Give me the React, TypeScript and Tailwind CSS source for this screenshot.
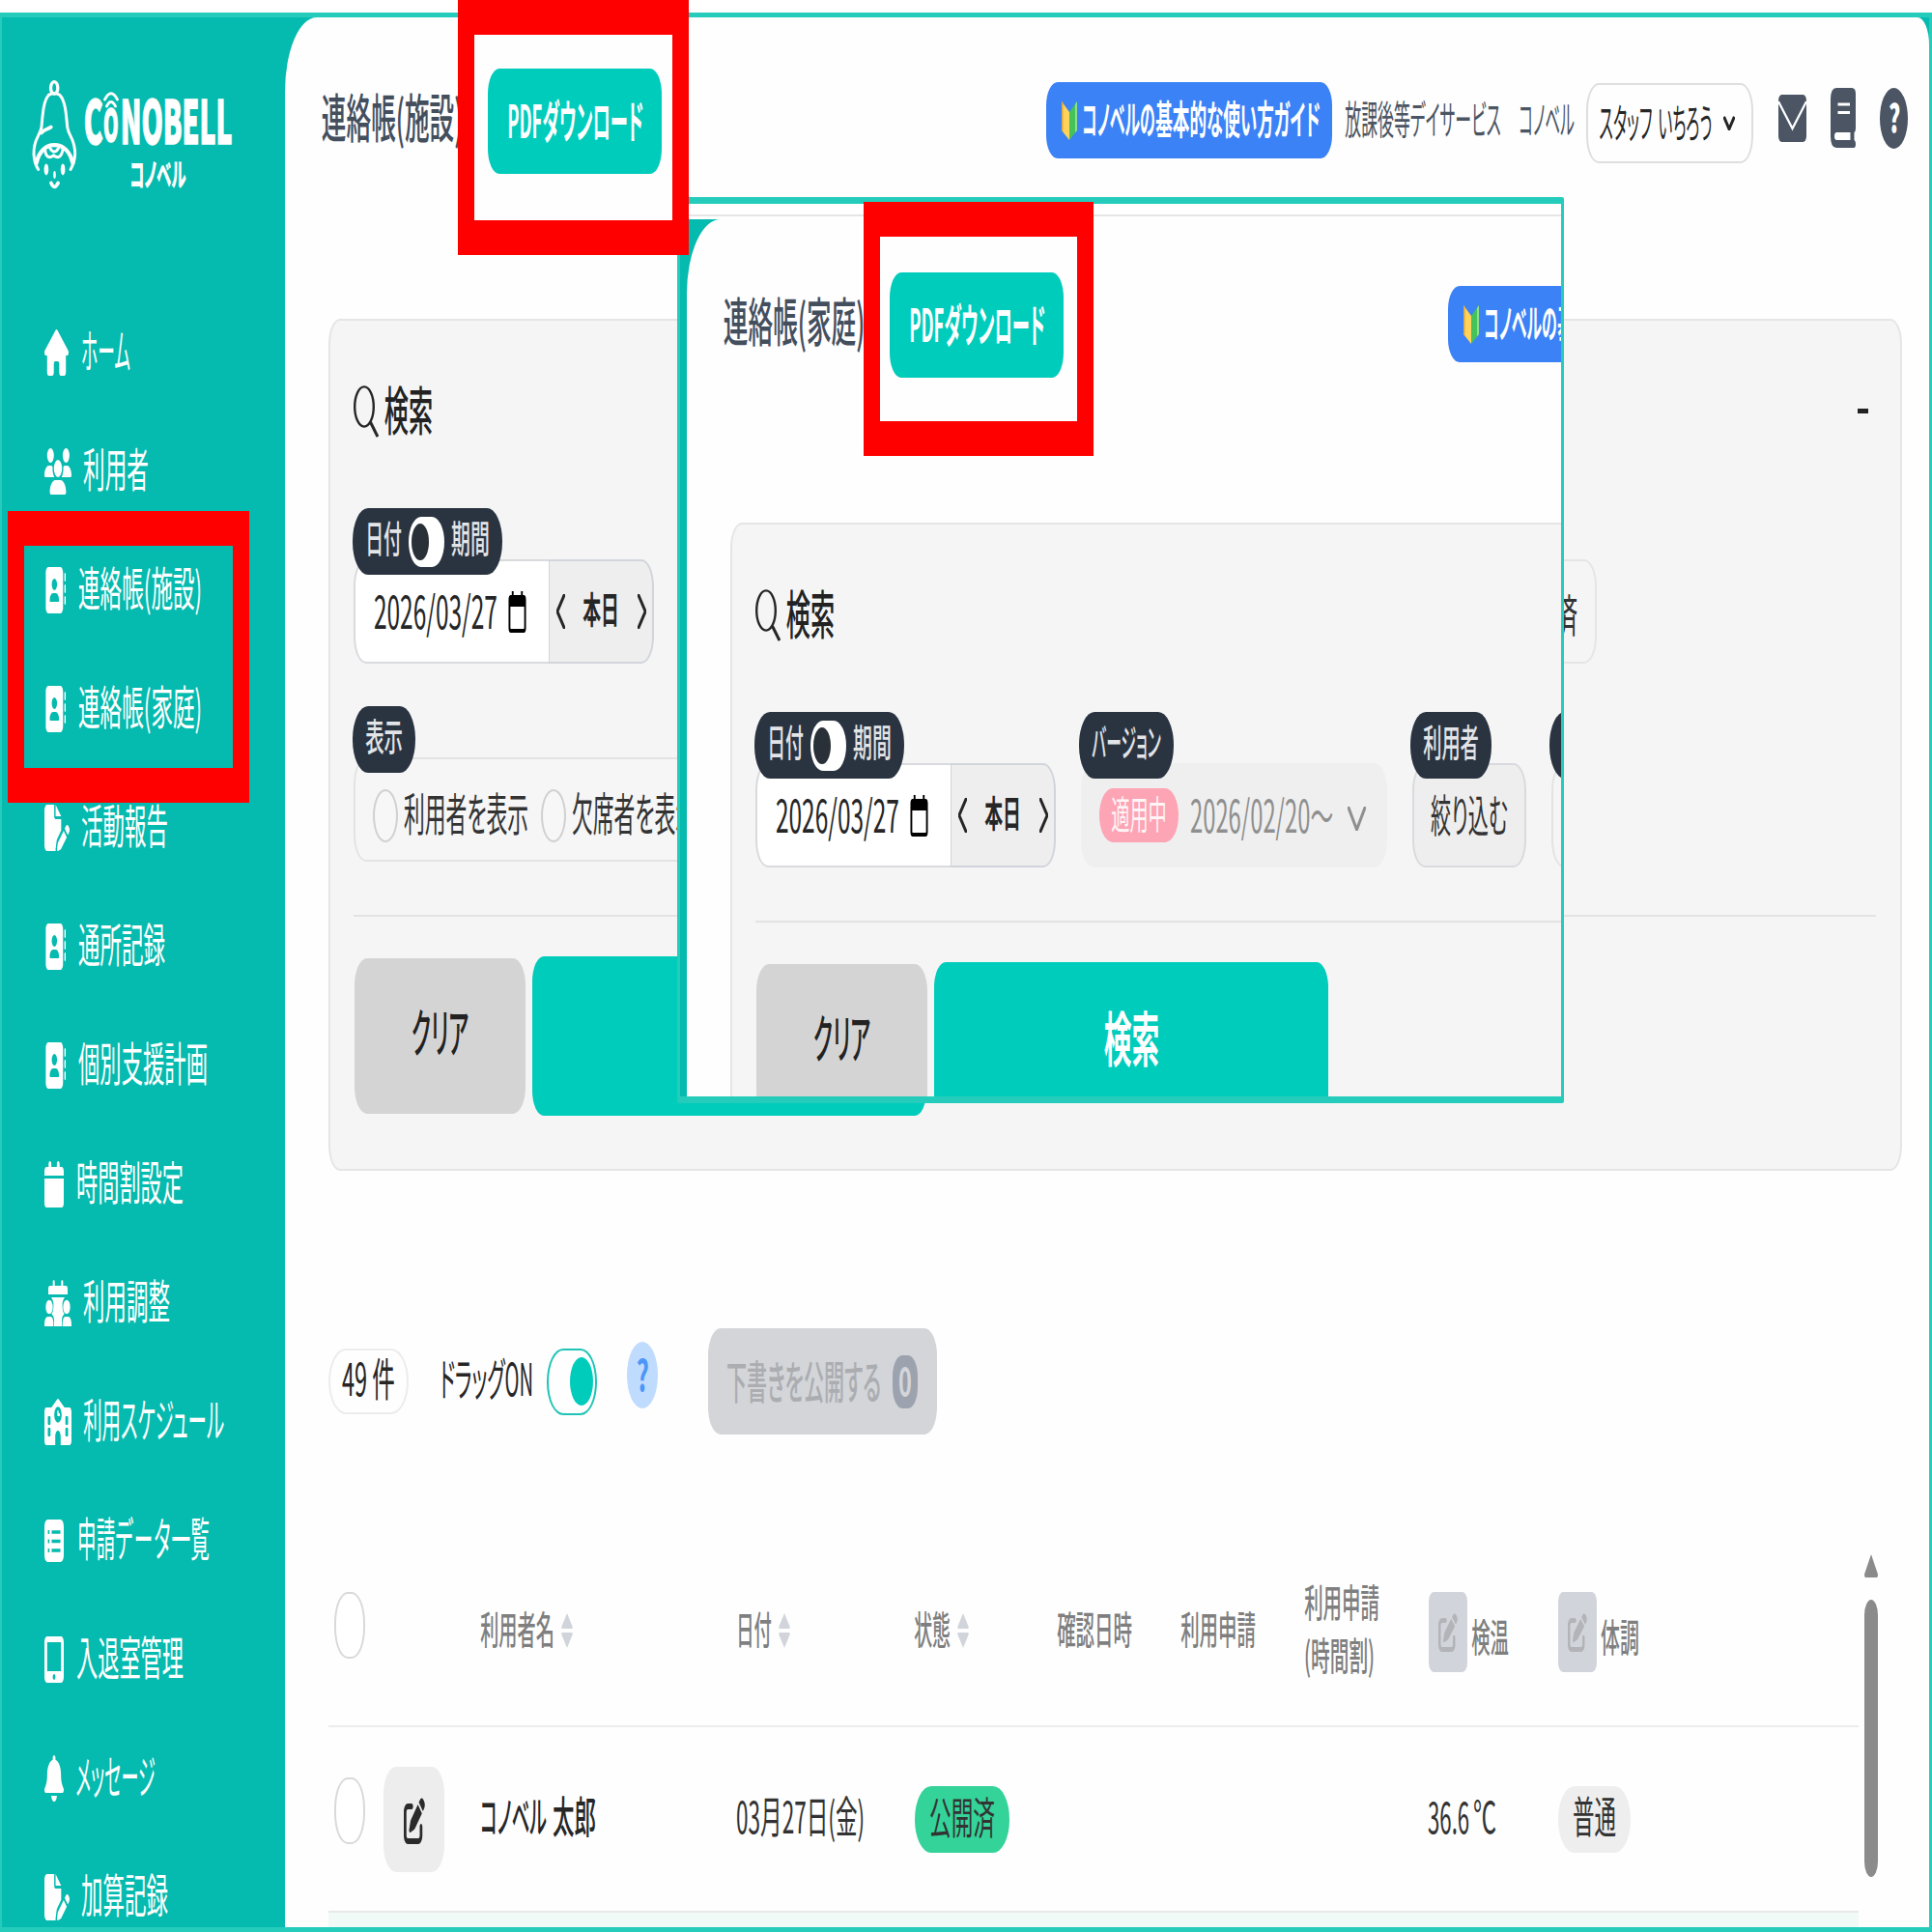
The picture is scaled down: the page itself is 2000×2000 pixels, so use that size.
import { useLayoutEffect, useRef } from "react";
import type { ReactNode } from "react";
import {
  FaHouse,
  FaUsers,
  FaAddressBook,
  FaFilePen,
  FaCalendar,
  FaSchool,
  FaTabletScreenButton,
  FaBell,
  FaPenToSquare,
} from "react-icons/fa6";

/* Condensed text: squeezes one line so that its glyphs span the box's width. */
function Fit({ children, className = "" }: { children: ReactNode; className?: string }) {
  const outer = useRef<HTMLSpanElement>(null);
  const inner = useRef<HTMLSpanElement>(null);
  useLayoutEffect(() => {
    const o = outer.current!;
    const i = inner.current!;
    const fs = parseFloat(getComputedStyle(o).fontSize);
    const bearing = 0.045 * fs;
    const k = o.clientWidth / (i.offsetWidth - bearing * 2);
    i.style.transform = `translate(${-bearing * k}px, ${-0.056 * fs}px) scaleX(${k})`;
  }, []);
  return (
    <span ref={outer} className={`block h-[1em] shrink-0 leading-none ${className}`}>
      <span ref={inner} className="block w-max origin-left whitespace-nowrap [font-feature-settings:'palt']">
        {children}
      </span>
    </span>
  );
}

/* ---------- icons ---------- */

const stretch = { preserveAspectRatio: "none" } as const;

function PeopleCalendar({ className }: { className: string }) {
  return (
    <svg viewBox="0 0 84 144" {...stretch} className={className} fill="currentColor">
      <path d="M26 4a3 3 0 0 1 6 0v14h20V4a3 3 0 0 1 6 0v14h9q5 0 5 8v19H12V26q0-8 5-8h9z" />
      <path d="M21 54h42q-9 12-7 32 1 14 6 20-8 6-8 20v18H30v-18q0-14-8-20 5-6 6-20 2-20-7-32z" />
      <ellipse cx="15" cy="84" rx="11" ry="22" />
      <ellipse cx="69" cy="84" rx="11" ry="22" />
      <path d="M0 140q0-26 11-26h8q9 0 9 26v4H0zM56 140q0-26 9-26h8q11 0 11 26v4H56z" />
    </svg>
  );
}

function ListSheet({ className }: { className: string }) {
  return (
    <svg viewBox="0 0 20 44" {...stretch} className={className}>
      <rect width="20" height="44" rx="3.5" ry="7" fill="currentColor" />
      <path d="M7.5 13h9M7.5 22.5h9M7.5 32h9" stroke="#05BAAE" strokeWidth="3.6" />
      <path d="M3.6 13h1.6M3.6 22.5h1.6M3.6 32h1.6" stroke="#05BAAE" strokeWidth="4" />
    </svg>
  );
}

function BellFace() {
  return (
    <svg viewBox="98 248 142 340" {...stretch} className="h-[113px] w-[47px] shrink-0" fill="none" stroke="white" strokeLinecap="round">
      <ellipse cx="168" cy="272" rx="11" ry="19" strokeWidth="10" />
      <path d="M151 294Q168 283 185 294C202 310 205 350 209 395C214 425 233 430 233 478C232 500 226 514 219 526" strokeWidth="9" />
      <path d="M151 294C135 310 132 350 128 395C122 425 103 430 104 478C105 500 110 514 118 526" strokeWidth="9" />
      <path d="M112 506C120 470 142 450 168 450C196 450 217 470 226 506" strokeWidth="13" />
      <path d="M128 412C138 398 148 402 158 394" strokeWidth="11" />
      <path d="M139 462C140 486 152 494 166 482C180 494 192 486 195 462M155 460Q168 482 181 460" strokeWidth="9" />
      <ellipse cx="143" cy="526" rx="7" ry="18" fill="white" stroke="none" />
      <ellipse cx="195" cy="526" rx="7" ry="18" fill="white" stroke="none" />
      <ellipse cx="169" cy="543" rx="4" ry="12" fill="white" stroke="none" />
      <path d="M158 568Q168 592 180 568" strokeWidth="11" />
    </svg>
  );
}

function Magnifier() {
  return (
    <svg viewBox="0 0 26 54" {...stretch} className="h-[54px] w-[26px] shrink-0" fill="none" stroke="#262626" strokeWidth="2.4">
      <ellipse cx="11" cy="22" rx="9.8" ry="20.6" />
      <path d="M17.5 38L25 53" strokeWidth="3" />
    </svg>
  );
}

function Chevron({ className, d }: { className: string; d: string }) {
  return (
    <svg viewBox="0 0 10 10" {...stretch} className={className} fill="none" stroke="currentColor">
      <path d={d} vectorEffect="non-scaling-stroke" />
    </svg>
  );
}

function DateIcon() {
  return (
    <svg viewBox="0 0 20 43" {...stretch} className="h-[43px] w-[19px] shrink-0">
      <path d="M4 0h2v4h8V0h2v4h1q2.5 0 2.5 5v29q0 5-2.500 5H3q-2.500 0-2.500-5V9Q.5 4 3 4h1zM2.500 16v22q0 1 .7 1h13.600q.7 0 .7-1V16z" fill="#000" fillRule="evenodd" />
    </svg>
  );
}

function Sprout() {
  return (
    <svg viewBox="0 0 16 41" {...stretch} className="h-[41px] w-[16px] shrink-0">
      <path d="M0 1L8 12V41L0 31Z" fill="#FFD25A" />
      <path d="M16 1L8 12V41L16 31Z" fill="#46C25A" />
      <path d="M14 4L16 1V31L14 33.500Z" fill="#8FE08A" />
      <path d="M0 1L1.500 3V33L0 31Z" fill="#E0A83E" />
    </svg>
  );
}

function SortIcon() {
  return (
    <svg viewBox="0 0 12 36" {...stretch} className="mb-[2px] ml-[8px] h-[36px] w-[12px] shrink-0" fill="#d1d5db">
      <path d="M6 0L11.700 14Q12 16 11 16H1Q0 16 .3 14ZM6 36L11.700 22Q12 20 11 20H1Q0 20 .3 22Z" />
    </svg>
  );
}

/* ---------- sidebar ---------- */

const NAV: { icon: ReactNode; label: ReactNode; fit: string }[] = [
  { icon: <FaHouse {...stretch} className="h-[48px] w-[25px]" />, label: "ホーム", fit: "ml-[14px] w-[49px]" },
  { icon: <FaUsers {...stretch} className="h-[48px] w-[28px]" />, label: "利用者", fit: "ml-[13px] w-[66px]" },
  { icon: <FaAddressBook {...stretch} className="h-[48px] w-[22px]" />, label: "連絡帳(施設)", fit: "ml-[14px] w-[126px]" },
  { icon: <FaAddressBook {...stretch} className="h-[48px] w-[22px]" />, label: "連絡帳(家庭)", fit: "ml-[14px] w-[126px]" },
  { icon: <FaFilePen {...stretch} className="h-[48px] w-[26px]" />, label: "活動報告", fit: "ml-[13px] w-[88px]" },
  { icon: <FaAddressBook {...stretch} className="h-[48px] w-[22px]" />, label: "通所記録", fit: "ml-[14px] w-[88px]" },
  { icon: <FaAddressBook {...stretch} className="h-[48px] w-[22px]" />, label: "個別支援計画", fit: "ml-[14px] w-[132px]" },
  { icon: <FaCalendar {...stretch} className="h-[48px] w-[20px]" />, label: "時間割設定", fit: "ml-[14px] w-[109px]" },
  { icon: <PeopleCalendar className="h-[48px] w-[28px]" />, label: "利用調整", fit: "ml-[13px] w-[88px]" },
  { icon: <FaSchool {...stretch} className="h-[48px] w-[28px]" />, label: "利用スケジュール", fit: "ml-[13px] w-[144px]" },
  {
    icon: <ListSheet className="h-[44px] w-[20px]" />,
    label: (
      <>
        申請<span className="tracking-[0.06em]">データ</span>一覧
      </>
    ),
    fit: "ml-[15px] w-[135px]",
  },
  { icon: <FaTabletScreenButton {...stretch} className="h-[48px] w-[20px]" />, label: "入退室管理", fit: "ml-[14px] w-[109px]" },
  { icon: <FaBell {...stretch} className="h-[48px] w-[20px]" />, label: "メッセージ", fit: "ml-[13px] w-[81px]" },
  { icon: <FaFilePen {...stretch} className="h-[48px] w-[26px]" />, label: "加算記録", fit: "ml-[13px] w-[88px]" },
];

function Sidebar() {
  return (
    <aside className="w-[293px] shrink-0 overflow-hidden text-white">
      <div className="flex h-[285px] pt-[65px] pl-[31px]">
        <BellFace />
        <div className="ml-[8px] flex flex-col pt-[9px]">
          <div className="flex h-[65px] items-center [-webkit-text-stroke:1.5px_white]">
            <Fit className="w-[17px] text-[62px] font-black">C</Fit>
            <div className="mt-[-4px] ml-[2px] flex w-[15px] flex-col items-center">
              <svg viewBox="0 0 16 18" {...stretch} className="h-[18px] w-[16px]" fill="none" stroke="white" strokeLinecap="round" strokeWidth="2.800">
                <path d="M1.500 8Q8-4.500 14.500 8M3.500 15Q8 6 12.500 15" />
              </svg>
              <Fit className="mt-[-6px] w-[14px] text-[44px] font-black">O</Fit>
            </div>
            <Fit className="ml-[4px] w-[113px] text-[62px] font-black">NOBELL</Fit>
          </div>
          <Fit className="mt-[8px] ml-[47px] w-[57px] text-[33px] font-black">コノベル</Fit>
        </div>
      </div>
      <nav>
        {NAV.map((n, i) => (
          <div key={i} className="flex h-[123px] items-center pl-[44px]">
            <span className="shrink-0">{n.icon}</span>
            <Fit className={`mb-[3px] text-[48px] ${n.fit}`}>{n.label}</Fit>
          </div>
        ))}
      </nav>
    </aside>
  );
}

/* ---------- shared page parts ---------- */

function TitleBar({ title }: { title: string }) {
  return (
    <>
      <Fit className="mb-[2px] ml-[39px] w-[144px] text-[54px] font-medium text-[#444f5e]">{title}</Fit>
      <button className="mt-[2px] ml-[27px] flex h-[109px] w-[180px] shrink-0 items-center justify-center rounded-[12px/26px] bg-[#00CCBC]">
        <Fit className="w-[139px] text-[47px] font-bold text-white">PDFダウンロード</Fit>
      </button>
      <button className="mt-px ml-[398px] flex h-[79px] w-[296px] shrink-0 items-center rounded-[12px/24px] bg-[#3B82F6] pl-[16px]">
        <Sprout />
        <Fit className="mb-[2px] ml-[6px] w-[74px] text-[41px] font-bold text-white">コノベルの</Fit>
        <Fit className="mb-[2px] ml-[2px] w-[169px] text-[41px] font-bold text-white">基本的な使い方ガイド</Fit>
      </button>
    </>
  );
}

/* Dark label that straddles the top edge of a field. */
function Badge({ children }: { children: ReactNode }) {
  return (
    <div className="flex h-[69px] items-center rounded-[16px/34px] bg-[#2a3441] px-[14px] text-[#e2e4e7]">{children}</div>
  );
}

function DateField() {
  return (
    <div className="relative flex h-[108px] w-[311px] shrink-0">
      <div className="flex w-[202px] items-center rounded-l-[13px_28px] border-2 border-r-0 border-[#d9dade] bg-white pl-[20px]">
        <Fit className="w-[126px] text-[47px] text-[#262626]">2026/03/27</Fit>
        <span className="ml-[12px]">
          <DateIcon />
        </span>
      </div>
      <div className="flex w-[109px] items-center rounded-r-[13px_28px] border-2 border-l border-[#d1d5db] bg-[#eeeeee] text-[#262626]">
        <Chevron className="ml-[7px] h-[36px] w-[9px] stroke-[3px]" d="M9.500 0L1 5L9.500 10" />
        <Fit className="mb-[5px] ml-[19px] w-[36px] text-[38px] font-semibold">本日</Fit>
        <Chevron className="ml-[20px] h-[36px] w-[9px] stroke-[3px]" d="M.5 0L9 5L.5 10" />
      </div>
      <div className="absolute top-[-53px] left-[-1px]">
        <Badge>
          <Fit className="mb-[7px] w-[36px] text-[39px] font-medium">日付</Fit>
          <span className="ml-[8px] flex h-[52px] w-[37px] items-center rounded-[13px/26px] bg-white pl-[3px]">
            <span className="h-[38px] w-[18px] rounded-[50%] bg-[#2a3037]" />
          </span>
          <Fit className="mb-[7px] ml-[8px] w-[38px] text-[39px] font-medium">期間</Fit>
        </Badge>
      </div>
    </div>
  );
}

function PanelTitle() {
  return (
    <div className="mt-[64px] flex h-[60px] items-center">
      <Magnifier />
      <Fit className="ml-[7px] w-[48px] text-[54px] font-medium text-[#222]">検索</Fit>
      <span className="mr-[33px] mb-[2px] ml-auto h-[5px] w-[11px] bg-[#222]" />
    </div>
  );
}

function PanelButtons() {
  return (
    <div className="flex h-[165px] items-center">
      <button className="ml-px flex h-[161px] w-[177px] shrink-0 items-center justify-center rounded-[13px/28px] bg-[#d4d4d4]">
        <Fit className="mb-[5px] w-[57px] text-[54px] font-medium text-[#222]">クリア</Fit>
      </button>
      <button className="ml-[7px] flex h-[165px] w-[408px] shrink-0 items-center justify-center rounded-[12px/26px] bg-[#00CCBC]">
        <Fit className="mb-[6px] w-[55px] text-[61px] font-bold text-white">検索</Fit>
      </button>
    </div>
  );
}

function Radio({ label }: { label: string }) {
  return (
    <>
      <span className="mt-[12px] h-[55px] w-[26px] shrink-0 rounded-[50%] border-2 border-[#d0d0d0] bg-[#f7f7f7]" />
      <Fit className="mt-[9px] ml-[7px] w-[127px] text-[47px] text-[#333]">{label}</Fit>
    </>
  );
}

/* ---------- facility page ---------- */

function HeaderTools() {
  return (
    <>
      <Fit className="mb-[2px] ml-[14px] w-[160px] text-[41px] text-[#4b5563]">放課後等デイサービス</Fit>
      <Fit className="mb-[2px] ml-[20px] w-[56px] text-[41px] text-[#4b5563]">コノベル</Fit>
      <div className="mt-[6px] ml-[13px] flex h-[83px] w-[173px] shrink-0 items-center rounded-[13px/28px] border-2 border-[#dedede] pl-[12px] text-[#262626]">
        <Fit className="w-[54px] text-[42px]">スタッフ</Fit>
        <Fit className="ml-[7px] w-[55px] text-[42px]">いちろう</Fit>
        <Chevron className="ml-[12px] h-[15px] w-[12px] stroke-[3px]" d="M.5 .5L5 9L9.500 .5" />
      </div>
      <svg viewBox="0 0 29 49" {...stretch} className="mb-[4px] ml-[26px] h-[49px] w-[29px] shrink-0">
        <rect width="29" height="49" rx="3.500" ry="6" fill="#4b5563" />
        <path d="M0 7L14.500 35L29 7" fill="none" stroke="white" strokeWidth="2.200" />
      </svg>
      <svg viewBox="0 0 26 62" {...stretch} className="mb-[5px] ml-[25px] h-[62px] w-[26px] shrink-0">
        <path d="M6 0H22Q26 0 26 6V42Q26 45 24.500 46V54Q26 55 26 58Q26 62 24 62H6Q0 62 0 50V12Q0 0 6 0Z" fill="#4b5563" />
        <path d="M7.500 17H20M7.500 25.500H20" stroke="white" strokeWidth="3" />
        <path d="M6.500 46H20.500V54H6.500Q4 54 4 50T6.500 46Z" fill="white" />
      </svg>
      <div className="mb-[4px] ml-[25px] flex h-[63px] w-[29px] shrink-0 items-center justify-center rounded-[50%] bg-[#4b5563]">
        <Fit className="w-[10px] text-[40px] font-black text-white">?</Fit>
      </div>
    </>
  );
}

function Toolbar() {
  return (
    <div className="mt-[163px] ml-[45px] flex h-[110px] items-center text-[#262626]">
      <div className="flex h-[68px] w-[83px] items-center justify-center rounded-[18px/34px] border-2 border-[#ececec]">
        <Fit className="mb-[5px] w-[53px] text-[47px]">49 件</Fit>
      </div>
      <Fit className="mb-[6px] ml-[33px] w-[95px] text-[47px]">ドラッグON</Fit>
      <div className="ml-[15px] flex h-[69px] w-[52px] items-center justify-end rounded-[17px/34px] border-2 border-[#1fc4b6] pr-[2px]">
        <span className="h-[50px] w-[24px] rounded-[50%] bg-[#00CCBC]" />
      </div>
      <div className="mb-[14px] ml-[31px] flex h-[69px] w-[32px] items-center justify-center rounded-[50%] bg-[#bfdbfe]">
        <Fit className="w-[11px] text-[44px] font-bold text-[#4b96f8]">?</Fit>
      </div>
      <button className="ml-[52px] flex h-[110px] w-[237px] items-center rounded-[13px/28px] bg-[#d3d5d9] pl-[20px]">
        <Fit className="w-[158px] text-[47px] font-medium text-[#abadb1]">下書きを公開する</Fit>
        <span className="ml-[13px] flex h-[55px] w-[26px] items-center justify-center rounded-[10px/22px] bg-[#9ca3af]">
          <Fit className="w-[12px] text-[40px] font-bold text-[#d3d5d9]">0</Fit>
        </span>
      </button>
    </div>
  );
}

function EditHead({ label, fit }: { label: string; fit: string }) {
  return (
    <div className="flex items-center">
      <span className="mt-px flex h-[83px] w-[40px] items-center justify-center rounded-[5px/10px] bg-[#d1d5db] text-[#b3b4b7]">
        <FaPenToSquare {...stretch} className="mt-px h-[40px] w-[20px]" />
      </span>
      <Fit className={`mt-[11px] ml-[5px] text-[40px] font-medium text-[#7f7f7f] ${fit}`}>{label}</Fit>
    </div>
  );
}

function Table() {
  const grid = "grid grid-cols-[51px_101px_265px_184px_148px_128px_128px_128px_134px_1fr] items-center pl-[6px]";
  return (
    <div className="mt-[107px] ml-[45px] flex">
      <div className="w-[1584px]">
        <div className={`${grid} h-[196px] border-b-2 border-[#ececec] text-[40px] font-medium text-[#7f7f7f]`}>
          <span className="mb-[13px] h-[69px] w-[32px] rounded-[14px/32px] border-2 border-[#d9d9d9] bg-white" />
          <span />
          <div className="flex items-center">
            <Fit className="mb-[4px] w-[75px]">利用者名</Fit>
            <SortIcon />
          </div>
          <div className="flex items-center">
            <Fit className="mb-[4px] w-[35px]">日付</Fit>
            <SortIcon />
          </div>
          <div className="flex items-center">
            <Fit className="mb-[4px] w-[36px]">状態</Fit>
            <SortIcon />
          </div>
          <Fit className="mb-[4px] w-[76px]">確認日時</Fit>
          <Fit className="mb-[4px] w-[76px]">利用申請</Fit>
          <div className="mb-[5px] flex flex-col gap-[15px]">
            <Fit className="w-[76px]">利用申請</Fit>
            <Fit className="w-[71px]">(時間割)</Fit>
          </div>
          <EditHead label="検温" fit="w-[37px]" />
          <EditHead label="体調" fit="w-[38px]" />
        </div>
        <div className={`${grid} h-[192px] border-b-2 border-[#e8e8e8] text-[45px] text-[#333]`}>
          <span className="mb-[18px] h-[69px] w-[32px] rounded-[14px/32px] border-2 border-[#d9d9d9] bg-white" />
          <span className="flex h-[109px] w-[63px] items-center justify-center rounded-[13px/28px] bg-[#ededed] text-[#2b2b2b]">
            <FaPenToSquare {...stretch} className="mt-[3px] h-[48px] w-[22px]" />
          </span>
          <div className="mb-[3px] flex gap-[8px] font-medium text-[#262626]">
            <Fit className="w-[67px]">コノベル</Fit>
            <Fit className="w-[43px]">太郎</Fit>
          </div>
          <Fit className="mb-[3px] w-[131px]">03月27日(金)</Fit>
          <span className="mt-px flex h-[69px] w-[98px] items-center justify-center rounded-[17px/34px] bg-[#34d399]">
            <Fit className="mb-[3px] w-[66px]">公開済</Fit>
          </span>
          <span />
          <span />
          <span />
          <div className="mb-[3px] flex gap-[6px]">
            <Fit className="w-[41px]">36.6</Fit>
            <Fit className="w-[22px]">℃</Fit>
          </div>
          <span className="mt-px flex h-[69px] w-[75px] items-center justify-center rounded-[17px/34px] bg-[#eeeeee]">
            <Fit className="mb-[5px] w-[43px]">普通</Fit>
          </span>
        </div>
        <div className="h-[16px] bg-[#f0faf6]" />
      </div>
      <div className="ml-[6px] flex w-[14px] flex-col pt-[17px]">
        <svg viewBox="0 0 14 23" {...stretch} className="h-[24px] w-[14px]" fill="#8b8b8b">
          <path d="M7 0L14 20Q14 23 13 23H1Q0 23 0 20Z" />
        </svg>
        <span className="mt-[23px] h-[287px] w-[14px] rounded-[7px/16px] bg-[#8b8b8b]" />
      </div>
    </div>
  );
}

function FacilityPage() {
  return (
    <main className="w-[1702px] shrink-0 overflow-hidden rounded-tl-[33px_77px] rounded-tr-[12px_28px] bg-[#fefefe]">
      <div className="flex h-[312px] items-start">
        <div className="flex h-[212px] items-center">
          <TitleBar title="連絡帳(施設)" />
          <HeaderTools />
        </div>
      </div>
      <section className="ml-[45px] h-[882px] w-[1629px] rounded-[12px/26px] border-2 border-[#e5e5e5] bg-[#f5f5f5] pl-[24px]">
        <PanelTitle />
        <div className="mt-[123px] flex">
          <DateField />
          <div className="ml-[26px] flex h-[108px] w-[950px] items-center justify-end rounded-[13px/28px] border-2 border-[#e5e5e5] pr-[19px]">
            <Fit className="mt-[7px] w-[22px] text-[46px] text-[#333]">済</Fit>
          </div>
        </div>
        <div className="relative mt-[97px] flex h-[108px] w-[520px] items-center rounded-[13px/28px] border-2 border-[#e3e3e3] bg-[#f6f6f6] pl-[18px]">
          <Radio label="利用者を表示" />
          <span className="w-[14px] shrink-0" />
          <Radio label="欠席者を表示" />
          <div className="absolute top-[-55px] left-[-3px]">
            <Badge>
              <Fit className="mb-[7px] w-[37px] text-[39px] font-medium">表示</Fit>
            </Badge>
          </div>
        </div>
        <div className="mt-[55px] mb-[41px] h-[2px] w-[1576px] bg-[#e3e3e3]" />
        <PanelButtons />
      </section>
      <Toolbar />
      <Table />
    </main>
  );
}

/* ---------- family page window ---------- */

function FamilyWindow() {
  return (
    <div className="absolute top-[204px] left-[701px] flex h-[938px] w-[918px] flex-col overflow-hidden rounded-[2px] border-x-[3px] border-y-[7px] border-[#25ccbb] bg-white">
      <div className="h-[13px] w-full shrink-0 border-b-[2px] border-[#e5e5e5]" />
      <div className="h-[3px] shrink-0" />
      <div className="flex h-[1100px] shrink-0 bg-[#05BAAE] pl-[7px]">
        <div className="w-[1400px] shrink-0 rounded-tl-[35px_77px] bg-[#fefefe]">
          <div className="flex h-[216px] items-center">
            <TitleBar title="連絡帳(家庭)" />
          </div>
          <section className="mt-[98px] ml-[45px] h-[882px] w-[1628px] rounded-[12px/26px] border-2 border-[#e5e5e5] bg-[#f5f5f5] pl-[24px]">
            <PanelTitle />
            <div className="mt-[123px] flex gap-[26px]">
              <DateField />
              <div className="relative flex h-[108px] w-[317px] items-center rounded-[13px/28px] bg-[#efefef] pl-[19px]">
                <span className="flex h-[56px] w-[82px] items-center justify-center rounded-[14px/28px] bg-[#fda4b5]">
                  <Fit className="mb-[3px] w-[56px] text-[40px] text-[#fff5f6]">適用中</Fit>
                </span>
                <Fit className="mt-px ml-[13px] w-[146px] text-[46px] text-[#8f8f8f]">2026/02/20〜</Fit>
                <Chevron className="mt-[6px] ml-[16px] h-[25px] w-[19px] stroke-[3px] text-[#8f8f8f]" d="M.3 0L5 9.500L9.700 0" />
                <div className="absolute top-[-53px] left-[-2px]">
                  <Badge>
                    <Fit className="mb-[7px] w-[70px] text-[39px] font-medium">バージョン</Fit>
                  </Badge>
                </div>
              </div>
              <div className="relative flex h-[108px] w-[118px] items-center justify-center rounded-[13px/28px] border-2 border-[#d9dade] bg-[#eeeeee]">
                <Fit className="w-[78px] text-[46px] text-[#333]">絞り込む</Fit>
                <div className="absolute top-[-55px] left-[-4px]">
                  <Badge>
                    <Fit className="mb-[7px] w-[56px] text-[39px] font-medium">利用者</Fit>
                  </Badge>
                </div>
              </div>
              <div className="relative h-[108px] w-[200px] rounded-[13px/28px] border-2 border-[#e3e3e3]">
                <div className="absolute top-[-55px] left-[-4px]">
                  <Badge>
                    <span className="w-[56px]" />
                  </Badge>
                </div>
              </div>
            </div>
            <div className="mt-[55px] mb-[41px] h-[2px] w-[1576px] bg-[#e3e3e3]" />
            <PanelButtons />
          </section>
        </div>
      </div>
    </div>
  );
}

export default function App() {
  return (
    <div className="relative h-[2000px] w-[2000px] overflow-hidden bg-white pt-[13px] font-['Noto_Sans_CJK_JP',sans-serif]">
      <div className="flex h-[1987px] overflow-hidden border-y-[5px] border-r-[3px] border-l-[2px] border-[#25ccbb] bg-[#05BAAE]">
        <Sidebar />
        <FacilityPage />
      </div>
      <FamilyWindow />
      <div className="absolute top-0 left-[474px] h-[264px] w-[239px] border-x-[17px] border-y-[36px] border-[#ff0000]" />
      <div className="absolute top-[209px] left-[894px] h-[263px] w-[238px] border-x-[17px] border-y-[36px] border-[#ff0000]" />
      <div className="absolute top-[529px] left-[8px] h-[302px] w-[250px] border-x-[17px] border-y-[36px] border-[#ff0000]" />
    </div>
  );
}
